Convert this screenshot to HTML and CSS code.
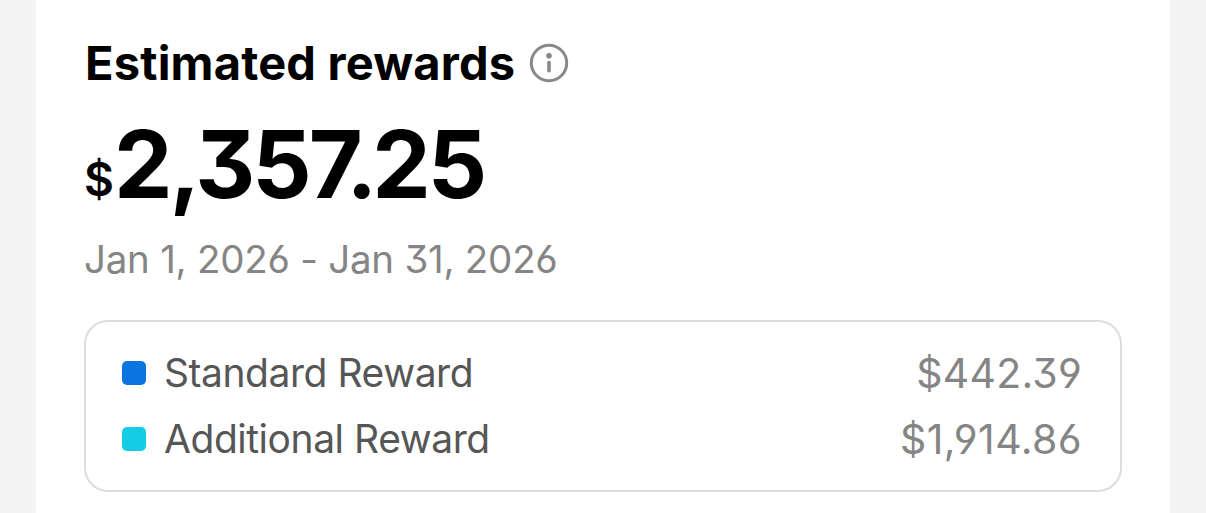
FILE: index.html
```html
<!DOCTYPE html>
<html lang="en">
<head>
  <meta charset="UTF-8">
  <meta name="viewport" content="width=device-width, initial-scale=1.0">
  <title>Estimated rewards</title>
  <link rel="stylesheet" href="styles.css">
</head>
<body>
  <main class="card">
    <div class="heading">
      <h1>Estimated rewards</h1>
      <svg class="info" viewBox="0 0 40 40" aria-hidden="true">
        <circle cx="20" cy="20" r="17.7" fill="none" stroke="currentColor" stroke-width="3"/>
        <circle cx="20" cy="12.8" r="2.8" fill="currentColor"/>
        <path d="M20 19.6V27.8" fill="none" stroke="currentColor" stroke-width="3.6" stroke-linecap="round"/>
      </svg>
    </div>
    <div class="amount"><span class="currency">$</span><span class="number">2,35<span class="tight">7.</span>25</span></div>
    <div class="period">Jan 1, 2026 - Jan 31, 2026</div>
    <div class="breakdown">
      <div class="row">
        <span class="dot standard"></span>
        <span class="label">Standard Reward</span>
        <span class="value">$442.39</span>
      </div>
      <div class="row">
        <span class="dot additional"></span>
        <span class="label">Additional Reward</span>
        <span class="value long">$1,914.86</span>
      </div>
    </div>
  </main>
</body>
</html>
```
FILE: styles.css
```css
* {
  box-sizing: border-box;
}
body {
  margin: 0;
  background: #f4f4f4;
  font-family: Inter, sans-serif;
  /* open 6 and 9, flat-top 3 */
  font-feature-settings: "cv03", "cv04", "cv09";
}
.card {
  height: 513px;
  margin: 0 36px;
  padding: 34px 48px 0;
  background: #fff;
}
.heading {
  display: flex;
  align-items: center;
  height: 58px;
}
h1 {
  width: 445px;
  margin: 0;
  padding-left: 1px;
  font-size: 47px;
  line-height: 58px;
  font-weight: 700;
  letter-spacing: 0.2px;
  white-space: nowrap;
}
.info {
  width: 40px;
  height: 40px;
  color: #888;
}
.amount {
  display: flex;
  height: 132px;
  line-height: 145px;
  font-weight: 700;
}
.currency {
  width: 30px;
  padding-top: 15px;
  font-size: 46px;
  font-weight: 600;
}
.number {
  font-size: 93px;
  font-weight: 750;
  letter-spacing: -3.1px;
}
.tight {
  letter-spacing: -5px;
}
.period {
  height: 72px;
  line-height: 71px;
  font-size: 38.5px;
  letter-spacing: -0.25px;
  color: #858585;
}
.breakdown {
  height: 172px;
  margin-top: 24px;
  padding: 18px 38px 0 36px;
  border: 2px solid #ddd;
  border-radius: 24px;
}
.row {
  display: flex;
  align-items: center;
  height: 66px;
  font-size: 39px;
}
.dot {
  width: 24px;
  height: 24px;
  border-radius: 5px;
}
.standard {
  background: #0a75e0;
}
.additional {
  background: #14cce5;
}
.label {
  margin-left: 18px;
  line-height: 66px;
  letter-spacing: -0.45px;
  color: #565656;
}
.value {
  margin-left: auto;
  font-size: 41px;
  letter-spacing: 0.2px;
  color: #858585;
}
.long {
  letter-spacing: 0.4px;
}
```
